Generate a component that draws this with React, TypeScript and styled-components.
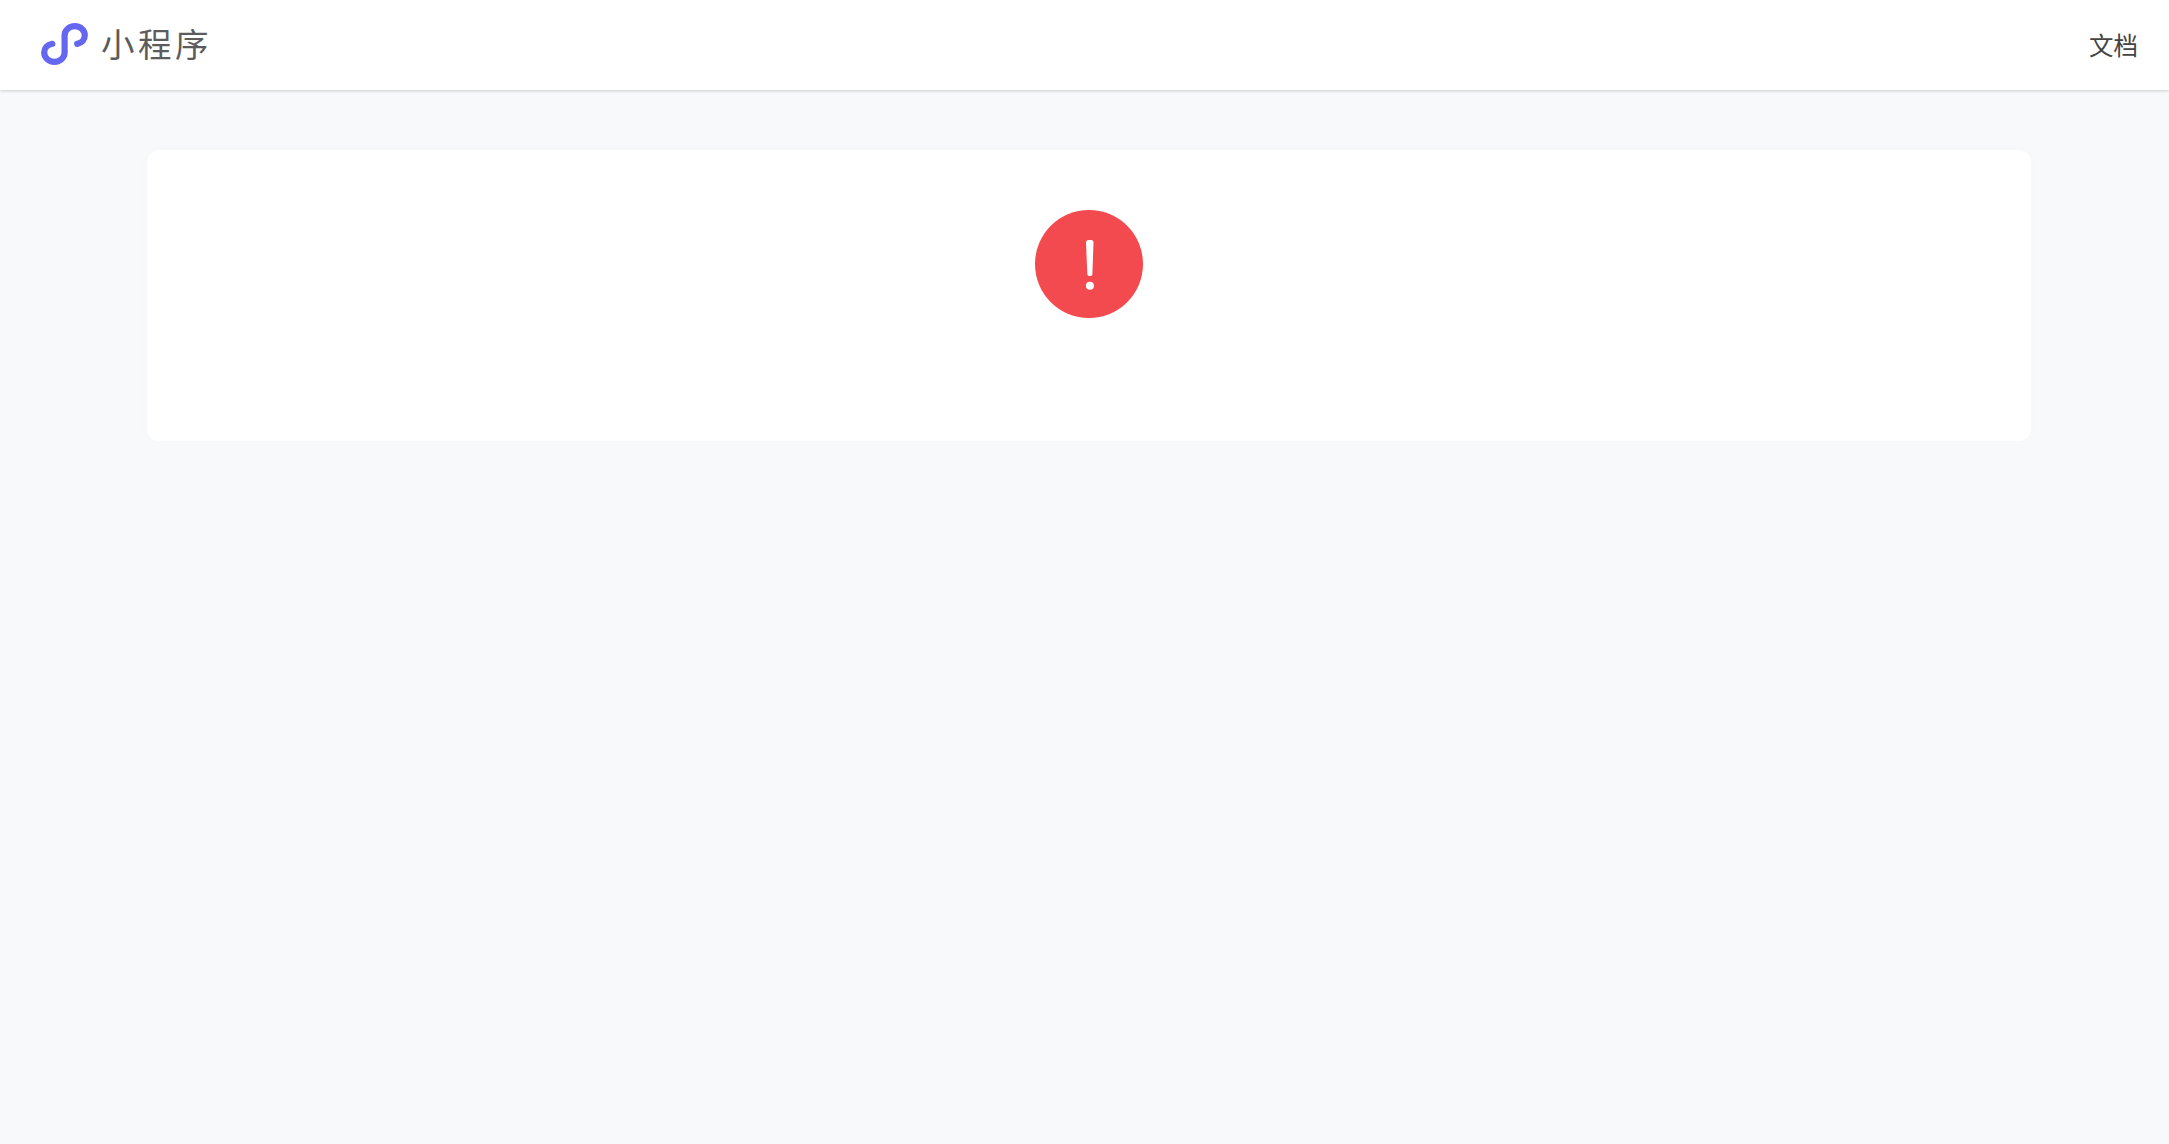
import styled, { createGlobalStyle } from "styled-components"

// **********
// component
// **********

export default function App() {
	return (
		<>
			<GlobalStyle />
			<Header>
				<Brand>
					<Logo />
					<BrandName>小程序</BrandName>
				</Brand>
				<DocsLink href="#">文档</DocsLink>
			</Header>
			<Main>
				<Card>
					<ErrorIcon />
				</Card>
			</Main>
		</>
	)
}

function Logo() {
	return (
		<LogoSvg viewBox="0 0 48 44" aria-hidden="true">
			<path d="M12.3 21.8C6.8 22.9 4.2 26.6 4.2 30.5C4.2 35.4 8.4 39.8 14.4 39.8C20.4 39.8 24.6 35.4 24.6 30.5V13.5C24.6 8.4 28.8 4.2 34.8 4.2C40.8 4.2 44.8 8.4 44.8 13.3C44.8 17.4 42.2 20.9 37.2 21.9" />
		</LogoSvg>
	)
}

function ErrorIcon() {
	return (
		<ErrorSvg viewBox="0 0 108 108" role="img" aria-label="error">
			<circle cx="54" cy="54" r="54" fill="#f24a4e" />
			<path
				d="M51 32.5Q51 30 53.5 30H56Q58.5 30 58.5 32.5L57.4 64Q57.3 66 55.8 66H54Q52.4 66 52.3 64Z"
				fill="#fff"
			/>
			<circle cx="54.9" cy="75.8" r="4" fill="#fff" />
		</ErrorSvg>
	)
}

// **********
// styles
// **********

const GlobalStyle = createGlobalStyle`
	* {
		box-sizing: border-box;
	}
	body {
		margin: 0;
		background: #f8f9fb;
		font-family: "Noto Sans CJK SC", sans-serif;
	}
`
const Header = styled.header`
	display: flex;
	align-items: center;
	justify-content: space-between;
	height: 90px;
	padding: 0 31px 0 40px;
	background: #fff;
	box-shadow: 0 1px 3px rgba(0, 0, 0, 0.18);
`
const Brand = styled.div`
	display: flex;
	align-items: center;
	gap: 13px;
`
const LogoSvg = styled.svg`
	width: 48px;
	height: 44px;
	margin-bottom: 2px;
	fill: none;
	stroke: #6467f0;
	stroke-width: 6.2;
	stroke-linecap: round;
`
const BrandName = styled.span`
	margin-bottom: 5px;
	color: #5c5c5c;
	font-size: 33.5px;
	line-height: 50px;
	letter-spacing: 3.5px;
`
const DocsLink = styled.a`
	color: #444;
	font-size: 24.5px;
	line-height: 36px;
	text-decoration: none;
`
const Main = styled.main`
	padding: 60px 138px 0 147px;
`
const Card = styled.section`
	display: flex;
	justify-content: center;
	height: 291px;
	padding-top: 60px;
	border-radius: 12px;
	background: #fff;
	box-shadow: 0 0 15px rgba(0, 0, 0, 0.015);
`
const ErrorSvg = styled.svg`
	width: 108px;
	height: 108px;
`
